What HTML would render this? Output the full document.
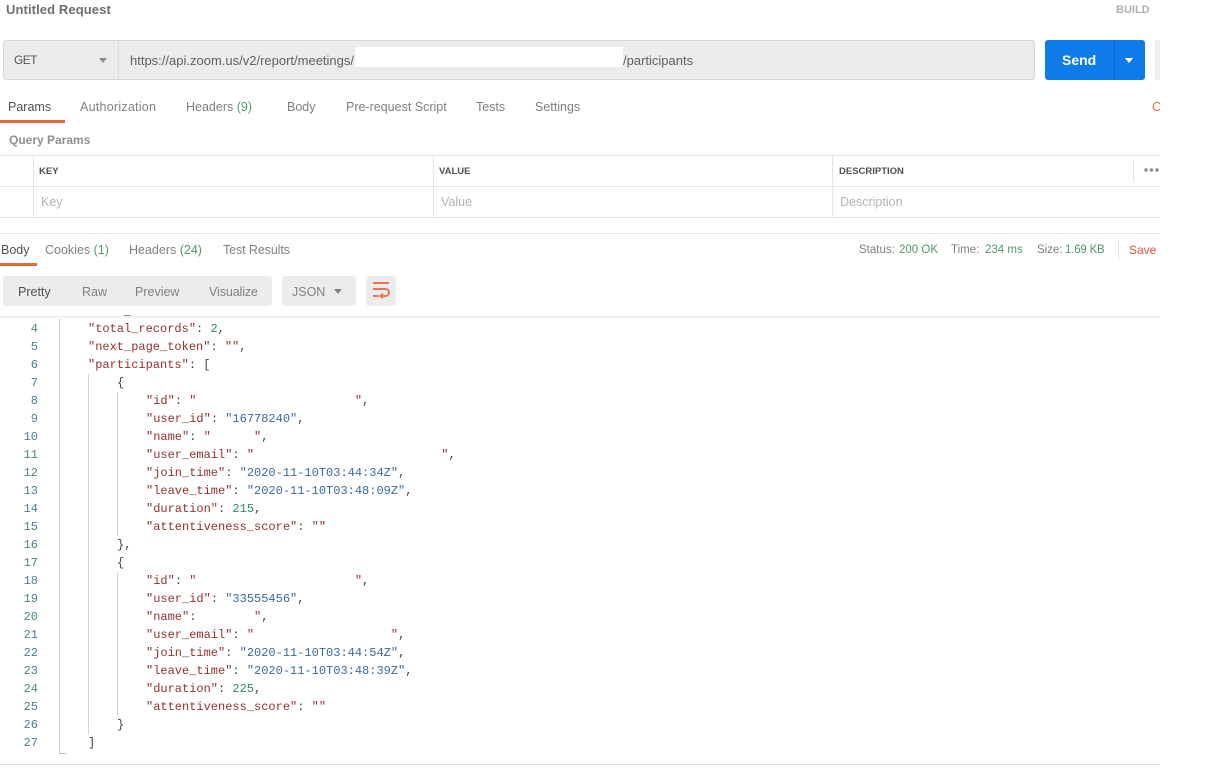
<!DOCTYPE html>
<html lang="en">
<head>
<meta charset="utf-8">
<title>Untitled Request</title>
<style>
html,body{margin:0;padding:0;background:#fff;}
body{width:1216px;height:772px;position:relative;overflow:hidden;font-family:"Liberation Sans",sans-serif;font-size:12.5px;color:#808080;}
.a{position:absolute;white-space:nowrap;}
.t{position:absolute;white-space:nowrap;line-height:16px;}
.g{color:#4f9a6c;}
.d{color:#505050;}
.h{font-size:9.5px;font-weight:bold;color:#505050;line-height:12px;}
.p{color:#b3b3b3;}
.ln{position:absolute;left:0;width:38px;text-align:right;font:12px/18px "Liberation Mono",monospace;color:#4d7f8c;}
.c{position:absolute;white-space:pre;font:12px/18px "Liberation Mono",monospace;color:#444;}
.k{color:#94302f;}
.s{color:#3a6aa0;}
.n{color:#2f8a6c;}
</style>
</head>
<body>
<div class="t" style="left:6px;top:2px;font-size:13px;font-weight:bold;color:#6e6e6e;letter-spacing:.1px;">Untitled Request</div>
<div class="t" style="left:1116px;top:2px;font-size:11px;font-weight:bold;color:#b0b0b0;">BUILD</div>

<!-- URL bar -->
<div class="a" style="left:3px;top:40px;width:1030px;height:38px;background:#ececec;border:1px solid #d6d6d6;border-radius:3px;"></div>
<div class="a" style="left:118px;top:41px;width:1px;height:38px;background:#dcdcdc;"></div>
<div class="t" style="left:14px;top:52px;font-size:12px;color:#555;letter-spacing:-.6px;">GET</div>
<div class="a" style="left:99px;top:58px;width:0;height:0;border-left:4px solid transparent;border-right:4px solid transparent;border-top:5px solid #8c8c8c;"></div>
<div class="t" style="left:130px;top:53px;font-size:13px;color:#606060;">https://api.zoom.us/v2/report/meetings/</div>
<div class="a" style="left:355px;top:47px;width:268px;height:20px;background:#fff;"></div>
<div class="t" style="left:623px;top:53px;font-size:13px;color:#606060;">/participants</div>

<!-- Send -->
<div class="a" style="left:1045px;top:40px;width:100px;height:40px;background:#0e7be8;border-radius:3px;"></div>
<div class="a" style="left:1114px;top:40px;width:1px;height:40px;background:#0a6bcc;"></div>
<div class="t" style="left:1062px;top:52px;font-size:14px;font-weight:bold;color:#fff;">Send</div>
<div class="a" style="left:1125px;top:58px;width:0;height:0;border-left:4px solid transparent;border-right:4px solid transparent;border-top:5px solid #fff;"></div>
<div class="a" style="left:1155px;top:40px;width:5px;height:40px;background:#f0f0f0;"></div>

<!-- Request tabs -->
<div class="t d" style="left:8px;top:99px;">Params</div>
<div class="a" style="left:0;top:120px;width:65px;height:3px;background:#e4683a;"></div>
<div class="t" style="left:80px;top:99px;letter-spacing:.25px;">Authorization</div>
<div class="t" style="left:186px;top:99px;">Headers <span class="g">(9)</span></div>
<div class="t" style="left:287px;top:99px;">Body</div>
<div class="t" style="left:346px;top:99px;">Pre-request Script</div>
<div class="t" style="left:476px;top:99px;">Tests</div>
<div class="t" style="left:535px;top:99px;">Settings</div>
<div class="a" style="left:1152px;top:98px;width:8px;height:18px;overflow:hidden;color:#d9714f;font-size:13px;line-height:18px;">C</div>

<div class="t" style="left:9px;top:132px;font-weight:bold;font-size:12px;color:#8f8f8f;">Query Params</div>

<!-- Table -->
<div class="a" style="left:0;top:155px;width:1160px;height:1px;background:#e5e5e5;"></div>
<div class="a" style="left:0;top:186px;width:1160px;height:1px;background:#e5e5e5;"></div>
<div class="a" style="left:0;top:217px;width:1160px;height:1px;background:#e5e5e5;"></div>
<div class="a" style="left:33px;top:155px;width:1px;height:62px;background:#e5e5e5;"></div>
<div class="a" style="left:433px;top:155px;width:1px;height:62px;background:#e5e5e5;"></div>
<div class="a" style="left:832px;top:155px;width:1px;height:62px;background:#e5e5e5;"></div>
<div class="a" style="left:1133px;top:160px;width:1px;height:22px;background:#e5e5e5;"></div>
<div class="a h" style="left:39px;top:166px;">KEY</div>
<div class="a h" style="left:439px;top:166px;">VALUE</div>
<div class="a h" style="left:839px;top:166px;">DESCRIPTION</div>
<svg class="a" style="left:1144px;top:168px;display:block;" width="16" height="4"><circle cx="2" cy="2" r="1.700" fill="#8a8a8a"/><circle cx="7.500" cy="2" r="1.700" fill="#8a8a8a"/><circle cx="13" cy="2" r="1.700" fill="#8a8a8a"/></svg>
<div class="t p" style="left:41px;top:194px;">Key</div>
<div class="t p" style="left:441px;top:194px;">Value</div>
<div class="t p" style="left:840px;top:194px;">Description</div>

<div class="a" style="left:0;top:233px;width:1160px;height:1px;background:#e2e2e2;"></div>

<!-- Response tabs -->
<div class="t d" style="left:1px;top:242px;">Body</div>
<div class="a" style="left:0;top:263px;width:37px;height:3px;background:#e4683a;"></div>
<div class="t" style="left:45px;top:242px;">Cookies <span class="g">(1)</span></div>
<div class="t" style="left:129px;top:242px;">Headers <span class="g">(24)</span></div>
<div class="t" style="left:223px;top:242px;letter-spacing:-.1px;">Test Results</div>

<div class="t" style="left:859px;top:242px;font-size:11.5px;">Status:</div>
<div class="t g" style="left:899px;top:242px;font-size:11.5px;">200 OK</div>
<div class="t" style="left:951px;top:242px;font-size:11.5px;">Time:</div>
<div class="t g" style="left:985px;top:242px;font-size:11.5px;">234 ms</div>
<div class="t" style="left:1037px;top:242px;font-size:11.5px;">Size:</div>
<div class="t g" style="left:1065px;top:242px;font-size:11.5px;letter-spacing:-.2px;">1.69 KB</div>
<div class="a" style="left:1118px;top:240px;width:1px;height:20px;background:#e5e5e5;"></div>
<div class="t" style="left:1129px;top:242px;font-size:12px;color:#e0533a;">Save</div>

<!-- Toolbar -->
<div class="a" style="left:3px;top:276px;width:269px;height:30px;background:#ececec;border-radius:3px;"></div>
<div class="t d" style="left:18px;top:284px;">Pretty</div>
<div class="t" style="left:82px;top:284px;">Raw</div>
<div class="t" style="left:135px;top:284px;">Preview</div>
<div class="t" style="left:209px;top:284px;letter-spacing:-.1px;">Visualize</div>
<div class="a" style="left:282px;top:276px;width:74px;height:30px;background:#ececec;border-radius:3px;"></div>
<div class="t" style="left:292px;top:284px;">JSON</div>
<div class="a" style="left:334px;top:289px;width:0;height:0;border-left:4px solid transparent;border-right:4px solid transparent;border-top:5px solid #808080;"></div>
<div class="a" style="left:366px;top:276px;width:30px;height:30px;background:#ececec;border-radius:3px;"></div>
<svg class="a" style="left:372px;top:281px;" width="18" height="18" viewBox="0 0 18 18" fill="none" stroke="#e4764f" stroke-width="2">
  <path d="M1 2H17"/>
  <path d="M1 8H13.500a3.500 3.500 0 0 1 0 7H8.500"/>
  <path d="M11 12.500L8 15L11 17.500" stroke-width="1.500"/>
  <path d="M1 15H6.500"/>
</svg>
<div class="a" style="left:0;top:316px;width:1160px;height:3px;background:linear-gradient(#ececec,#fff);"></div>

<!-- Guides -->
<div class="a" style="left:59px;top:319px;width:1px;height:435px;background:#cfcfcf;"></div>
<div class="a" style="left:88px;top:374px;width:1px;height:360px;background:#d4d4d4;"></div>
<div class="a" style="left:117px;top:392px;width:1px;height:144px;background:#d4d4d4;"></div>
<div class="a" style="left:117px;top:572px;width:1px;height:144px;background:#d4d4d4;"></div>
<div class="a" style="left:59px;top:753px;width:7px;height:1px;background:#bdbdbd;"></div>
<div class="a" style="left:124px;top:315px;width:7px;height:1px;background:#999;"></div>

<!-- Line numbers -->
<div class="ln" style="top:320px;">4</div>
<div class="ln" style="top:338px;">5</div>
<div class="ln" style="top:356px;">6</div>
<div class="ln" style="top:374px;">7</div>
<div class="ln" style="top:392px;">8</div>
<div class="ln" style="top:410px;">9</div>
<div class="ln" style="top:428px;">10</div>
<div class="ln" style="top:446px;">11</div>
<div class="ln" style="top:464px;">12</div>
<div class="ln" style="top:482px;">13</div>
<div class="ln" style="top:500px;">14</div>
<div class="ln" style="top:518px;">15</div>
<div class="ln" style="top:536px;">16</div>
<div class="ln" style="top:554px;">17</div>
<div class="ln" style="top:572px;">18</div>
<div class="ln" style="top:590px;">19</div>
<div class="ln" style="top:608px;">20</div>
<div class="ln" style="top:626px;">21</div>
<div class="ln" style="top:644px;">22</div>
<div class="ln" style="top:662px;">23</div>
<div class="ln" style="top:680px;">24</div>
<div class="ln" style="top:698px;">25</div>
<div class="ln" style="top:716px;">26</div>
<div class="ln" style="top:734px;">27</div>

<!-- Code -->
<div class="c" style="left:88px;top:320px;"><span class="k">"total_records"</span>: <span class="n">2</span>,</div>
<div class="c" style="left:88px;top:338px;"><span class="k">"next_page_token"</span>: <span class="k">""</span>,</div>
<div class="c" style="left:88px;top:356px;"><span class="k">"participants"</span>: [</div>
<div class="c" style="left:117px;top:374px;">{</div>
<div class="c" style="left:146px;top:392px;"><span class="k">"id"</span>: <span class="k">"                      "</span>,</div>
<div class="c" style="left:146px;top:410px;"><span class="k">"user_id"</span>: <span class="s">"16778240"</span>,</div>
<div class="c" style="left:146px;top:428px;"><span class="k">"name"</span>: <span class="k">"      "</span>,</div>
<div class="c" style="left:146px;top:446px;"><span class="k">"user_email"</span>: <span class="k">"                          "</span>,</div>
<div class="c" style="left:146px;top:464px;"><span class="k">"join_time"</span>: <span class="s">"2020-11-10T03:44:34Z"</span>,</div>
<div class="c" style="left:146px;top:482px;"><span class="k">"leave_time"</span>: <span class="s">"2020-11-10T03:48:09Z"</span>,</div>
<div class="c" style="left:146px;top:500px;"><span class="k">"duration"</span>: <span class="n">215</span>,</div>
<div class="c" style="left:146px;top:518px;"><span class="k">"attentiveness_score"</span>: <span class="k">""</span></div>
<div class="c" style="left:117px;top:536px;">},</div>
<div class="c" style="left:117px;top:554px;">{</div>
<div class="c" style="left:146px;top:572px;"><span class="k">"id"</span>: <span class="k">"                      "</span>,</div>
<div class="c" style="left:146px;top:590px;"><span class="k">"user_id"</span>: <span class="s">"33555456"</span>,</div>
<div class="c" style="left:146px;top:608px;"><span class="k">"name"</span>:        <span class="k">"</span>,</div>
<div class="c" style="left:146px;top:626px;"><span class="k">"user_email"</span>: <span class="k">"                   "</span>,</div>
<div class="c" style="left:146px;top:644px;"><span class="k">"join_time"</span>: <span class="s">"2020-11-10T03:44:54Z"</span>,</div>
<div class="c" style="left:146px;top:662px;"><span class="k">"leave_time"</span>: <span class="s">"2020-11-10T03:48:39Z"</span>,</div>
<div class="c" style="left:146px;top:680px;"><span class="k">"duration"</span>: <span class="n">225</span>,</div>
<div class="c" style="left:146px;top:698px;"><span class="k">"attentiveness_score"</span>: <span class="k">""</span></div>
<div class="c" style="left:117px;top:716px;">}</div>
<div class="c" style="left:88px;top:734px;">]</div>

<div class="a" style="left:0;top:764px;width:1160px;height:1px;background:#dedede;"></div>
</body>
</html>
